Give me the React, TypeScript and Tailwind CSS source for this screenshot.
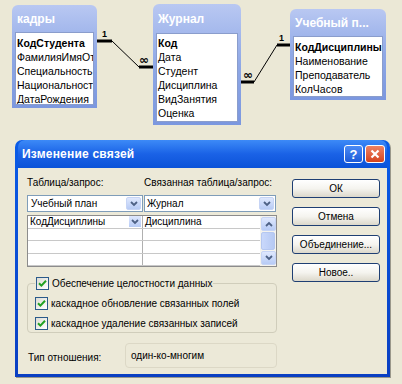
import React from 'react';

type TableBoxProps = {
  title: string;
  items: string[];
  className: string;
  titleH: string;
  listPad: string;
};

function TableBox({ title, items, className, titleH, listPad }: TableBoxProps) {
  return (
    <div className={`absolute flex flex-col rounded-t-[6px] bg-gradient-to-b from-[#b9c8f2] via-[#8fa8e6] to-[#7b97df] px-[3px] pb-[3px] ${className}`}>
      <div className={`${titleH} flex items-center pl-[2px] text-[12px] font-bold text-white whitespace-nowrap overflow-hidden`}>{title}</div>
      <div className={`flex-1 bg-white border border-[#8a9dcc] ${listPad} pl-[1px] overflow-hidden`}>
        {items.map((it, i) => (
          <div key={it} className={`h-[14px] leading-[14px] text-[10.5px] text-black whitespace-nowrap ${i === 0 ? 'font-bold' : ''}`}>{it}</div>
        ))}
      </div>
    </div>
  );
}

function Chevron({ className = '' }: { className?: string }) {
  return (
    <svg width="8" height="6" viewBox="0 0 8 6" className={className}>
      <path d="M1 1 L4 4 L7 1" fill="none" stroke="#4d6185" strokeWidth="1.8" />
    </svg>
  );
}

function DropBtn({ up = false }: { up?: boolean }) {
  return (
    <div className="w-[15px] h-full flex items-center justify-center rounded-[2px] bg-gradient-to-b from-[#dfe8fd] to-[#b7cbf5] border border-[#c6d4f5]">
      <Chevron className={up ? 'rotate-180' : ''} />
    </div>
  );
}

function XpButton({ label }: { label: string }) {
  return (
    <div className="h-[19px] w-[88px] flex items-center justify-center rounded-[3px] border border-[#1f3f73] bg-gradient-to-b from-white via-[#f5f4ef] to-[#dcd8cb] text-[10px] text-black">
      {label}
    </div>
  );
}

function Check({ label }: { label: string }) {
  return (
    <div className="flex items-center gap-[3px] h-[14px]">
      <div className="w-[13px] h-[13px] border border-[#2b5a8a] bg-gradient-to-br from-[#dcdcd4] to-white flex items-center justify-center">
        <svg width="9" height="9" viewBox="0 0 9 9">
          <path d="M1 4.2 L3.4 6.6 L8 1.8" fill="none" stroke="#21a121" strokeWidth="2" />
        </svg>
      </div>
      <span className="text-[10px] text-black whitespace-nowrap">{label}</span>
    </div>
  );
}

export default function App() {
  return (
    <div className="w-[402px] h-[384px] bg-[#ebe8d6] overflow-hidden font-['Liberation_Sans',sans-serif]">
      {/* schema diagram */}
      <div className="relative h-[140px]">
        <TableBox
          title="кадры"
          items={['КодСтудента', 'ФамилияИмяОтч', 'Специальность', 'Национальность', 'ДатаРождения']}
          className="left-[12px] top-[5px] w-[85px] h-[103px]"
          titleH="h-[27px]"
          listPad="pt-[3px]"
        />
        <TableBox
          title="Журнал"
          items={['Код', 'Дата', 'Студент', 'Дисциплина', 'ВидЗанятия', 'Оценка']}
          className="left-[153px] top-[4px] w-[88px] h-[121px]"
          titleH="h-[29px]"
          listPad="pt-[2px]"
        />
        <TableBox
          title="Учебный п..."
          items={['КодДисциплины', 'Наименование', 'Преподаватель', 'КолЧасов']}
          className="left-[290px] top-[9px] w-[96px] h-[91px]"
          titleH="h-[27px]"
          listPad="pt-[3px]"
        />
        <svg className="absolute left-0 top-0" width="402" height="140">
          <line x1="97" y1="41" x2="112" y2="41" stroke="#000" strokeWidth="3" />
          <line x1="112" y1="41" x2="139" y2="67" stroke="#000" strokeWidth="1" />
          <line x1="139" y1="67" x2="153" y2="67" stroke="#000" strokeWidth="3" />
          <text x="102" y="37" fontSize="9" fontWeight="bold" fontFamily="Liberation Sans">1</text>
          <text x="139" y="64" fontSize="12" fontWeight="bold" fontFamily="DejaVu Sans">∞</text>

          <line x1="241" y1="82" x2="254" y2="82" stroke="#000" strokeWidth="3" />
          <line x1="254" y1="82" x2="277" y2="45" stroke="#000" strokeWidth="1" />
          <line x1="277" y1="45" x2="290" y2="45" stroke="#000" strokeWidth="3" />
          <text x="243" y="79" fontSize="12" fontWeight="bold" fontFamily="DejaVu Sans">∞</text>
          <text x="279" y="41" fontSize="9" fontWeight="bold" fontFamily="Liberation Sans">1</text>
        </svg>
      </div>

      {/* dialog */}
      <div className="ml-[15px] w-[375px] h-[237px] flex flex-col rounded-t-[7px] bg-gradient-to-b from-[#0a5ce8] to-[#0a3fc2] px-[3px] pb-[3px] shadow-[1px_1px_0_#9a988a]">
        <div className="h-[28px] flex items-center justify-between pl-[4px] pr-[2px] rounded-t-[7px] bg-gradient-to-b from-[#3d8af7] via-[#1a62e6] to-[#0a52d8]">
          <span className="text-[12px] font-bold text-white tracking-[0.2px]">Изменение связей</span>
          <div className="flex gap-[2px]">
            <div className="w-[19px] h-[18px] rounded-[3px] border border-white bg-gradient-to-b from-[#4b8bf5] to-[#1d5ad8] flex items-center justify-center text-white text-[13px] font-bold leading-none">?</div>
            <div className="w-[20px] h-[18px] rounded-[3px] border border-white bg-gradient-to-b from-[#ee8263] to-[#d4421a] flex items-center justify-center">
              <svg width="10" height="10" viewBox="0 0 10 10">
                <path d="M1.5 1.5 L8.5 8.5 M8.5 1.5 L1.5 8.5" stroke="#fff" strokeWidth="2.2" />
              </svg>
            </div>
          </div>
        </div>
        <div className="flex-1 bg-[#ece9d8] flex gap-[15px] pl-[9px] pt-[8px]">
          <div className="w-[250px] flex flex-col">
            <div className="flex h-[13px] text-[10px] leading-[13px] text-black whitespace-nowrap">
              <span className="w-[117px]">Таблица/запрос:</span>
              <span>Связанная таблица/запрос:</span>
            </div>
            <div className="flex gap-[1px] mt-[6px] h-[17px] pr-[1px]">
              <div className="w-[116px] flex bg-white border border-[#7f9db9] p-[1px]">
                <span className="flex-1 text-[10px] leading-[13px] pl-[2px]">Учебный план</span>
                <DropBtn />
              </div>
              <div className="flex-1 flex bg-white border border-[#7f9db9] p-[1px]">
                <span className="flex-1 text-[10px] leading-[13px] pl-[1px]">Журнал</span>
                <DropBtn />
              </div>
            </div>
            <div className="mt-[3px] h-[52px] flex bg-white border border-[#8c8c8c]">
              <div className="flex-1 flex flex-col">
                {[0, 1, 2, 3].map(r => (
                  <div key={r} className="flex h-[12.5px] border-b border-[#c8c8c8]">
                    <div className="w-[115px] flex border-r border-[#b0b0b0] pr-[1px]">
                      {r === 0 && (
                        <>
                          <span className="flex-1 text-[10px] leading-[12px] pl-[2px]">КодДисциплины</span>
                          <div className="w-[12px] h-[11px] flex items-center justify-center bg-gradient-to-b from-[#dfe8fd] to-[#b7cbf5]">
                            <Chevron />
                          </div>
                        </>
                      )}
                    </div>
                    <div className="flex-1 text-[10px] leading-[12px] pl-[2px]">{r === 0 ? 'Дисциплина' : ''}</div>
                  </div>
                ))}
              </div>
              <div className="w-[16px] flex flex-col bg-[#f4f3ee] p-[1px] gap-[1px]">
                <div className="h-[14px]"><DropBtn up /></div>
                <div className="flex-1 rounded-[2px] bg-gradient-to-r from-[#c9d8fb] to-[#b6c9f3] border border-[#b5c7f0]" />
                <div className="h-[14px]"><DropBtn /></div>
              </div>
            </div>
            <fieldset className="mt-[9px] h-[57px] border border-[#d0cdbb] rounded-[4px] pl-[7px] pt-[6px] pb-[4px] flex flex-col gap-[6px]">
              <legend className="px-[1px]">
                <Check label="Обеспечение целостности данных" />
              </legend>
              <Check label="каскадное обновление связанных полей" />
              <Check label="каскадное удаление связанных записей" />
            </fieldset>
            <div className="mt-[10px] flex items-center h-[25px]">
              <span className="w-[98px] text-[10px] pl-[1px] pt-[3px]">Тип отношения:</span>
              <div className="flex-1 h-full flex items-center rounded-[4px] border border-[#dcd8c6] pl-[5px] text-[10px]">один-ко-многим</div>
            </div>
          </div>
          <div className="flex flex-col gap-[9px] pt-[3px]">
            <XpButton label="ОК" />
            <XpButton label="Отмена" />
            <XpButton label="Объединение..." />
            <XpButton label="Новое.." />
          </div>
        </div>
      </div>
    </div>
  );
}
